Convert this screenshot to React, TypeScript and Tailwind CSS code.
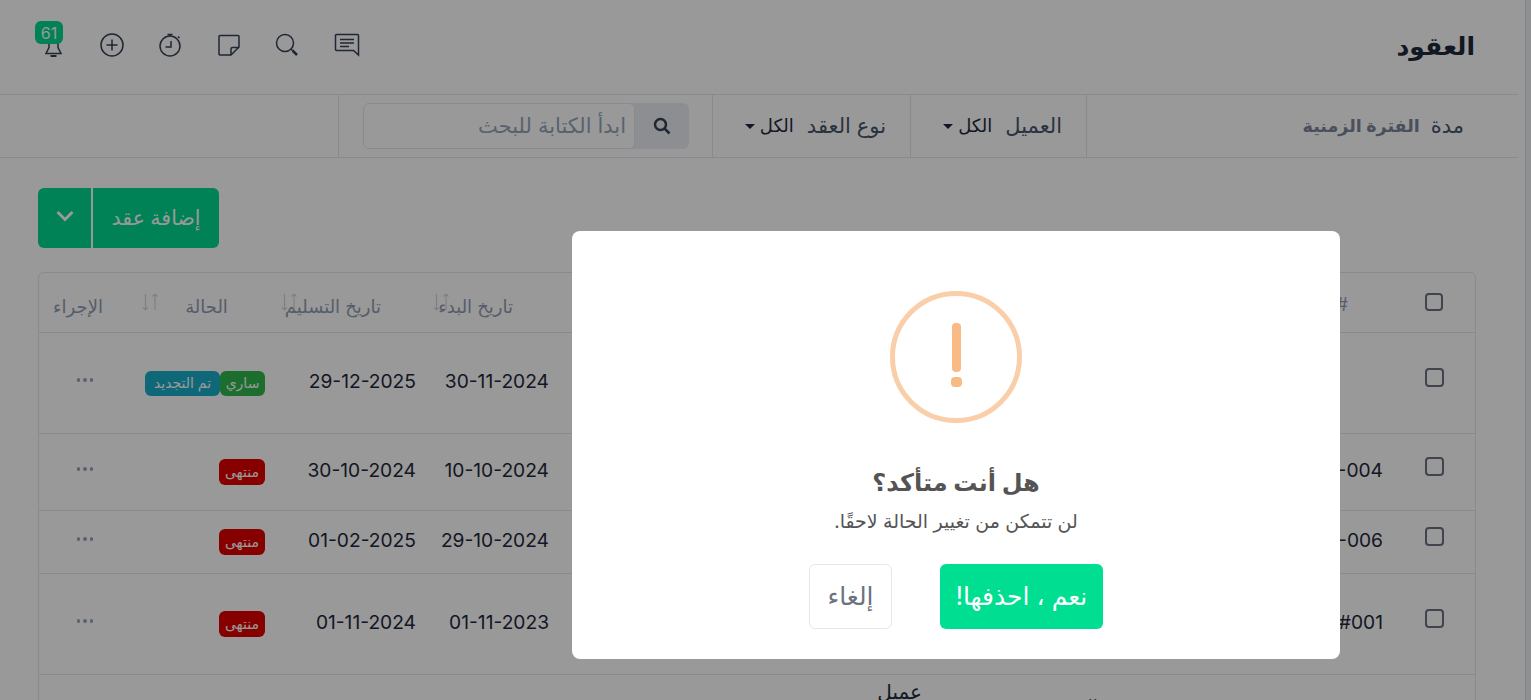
const FONT = "font-['Inter','Noto_Sans','DejaVu_Sans',sans-serif]";

type Row = {
  id: string;
  start: string;
  end: string;
  height: string;
  badge: "active" | "ended";
};

const rows: Row[] = [
  { id: "", start: "30-11-2024", end: "29-12-2025", height: "h-[101px]", badge: "active" },
  { id: "-004", start: "10-10-2024", end: "30-10-2024", height: "h-[77px]", badge: "ended" },
  { id: "-006", start: "29-10-2024", end: "01-02-2025", height: "h-[63px]", badge: "ended" },
  { id: "#001", start: "01-11-2023", end: "01-11-2024", height: "h-[101px]", badge: "ended" },
];

function SortArrows() {
  return (
    <svg width="18" height="18" viewBox="0 0 18 18" fill="none" stroke="#d1d5db" strokeWidth="1.2">
      <path d="M3.500 1v16M1 14.500l2.500 2.500L6 14.500M13 17V1M10.500 3.500 13 1l2.500 2.500" />
    </svg>
  );
}

function Checkbox() {
  return <span className="h-[19px] w-[19px] rounded-[4px] border-2 border-[#6b7280]" />;
}

function Dots() {
  return (
    <div className="flex justify-center gap-[3px] pb-[6px]">
      <span className="h-[3.5px] w-[3.5px] rounded-full bg-[#94a3b8]" />
      <span className="h-[3.5px] w-[3.5px] rounded-full bg-[#94a3b8]" />
      <span className="h-[3.5px] w-[3.5px] rounded-full bg-[#94a3b8]" />
    </div>
  );
}

function Caret() {
  return <span className="border-x-[5px] border-t-[5px] border-x-transparent border-t-[#1e293b]" />;
}

function TopIcons() {
  return (
    <div className="flex items-center gap-[34.5px] pb-1 text-[#334155]">
      <div className="relative h-6 w-6">
        <svg width="24" height="24" viewBox="0 0 24 24" fill="none" stroke="currentColor" strokeWidth="1.500">
          <path d="M8 8v6.500L5 20.500h15l-3-6V8" />
          <path d="M9.500 23h6" strokeWidth="2" />
        </svg>
        <span className="absolute -top-[12px] -left-[6px] flex h-[23px] w-7 items-center justify-center rounded-md bg-[#00d890] text-base text-white">
          61
        </span>
      </div>
      <svg width="24" height="24" viewBox="0 0 24 24" fill="none" stroke="currentColor" strokeWidth="1.500">
        <circle cx="12" cy="12" r="11" />
        <path d="M12 6.500v11M6.500 12h11" />
      </svg>
      <svg width="24" height="24" viewBox="0 0 24 24" fill="none" stroke="currentColor" strokeWidth="1.500">
        <circle cx="12" cy="13" r="10" />
        <path d="M9.500 1.500h5M12 2v1M20 3.500l1.500 1.500M13 8v6H7.500" />
      </svg>
      <svg width="24" height="24" viewBox="0 0 24 24" fill="none" stroke="currentColor" strokeWidth="1.500">
        <path d="M3 2.500h18a1 1 0 0 1 1 1V14l-8 8H3a1 1 0 0 1-1-1V3.500a1 1 0 0 1 1-1Z" />
        <path d="M14 22v-6a1.500 1.500 0 0 1 1.500-1.500H22" />
      </svg>
      <svg width="24" height="24" viewBox="0 0 24 24" fill="none" stroke="currentColor" strokeWidth="1.500">
        <circle cx="10" cy="10" r="8.500" />
        <path d="m16 16 1.500 1.500" />
        <path d="m17.500 17.500 4.500 4.500" strokeWidth="2.500" />
      </svg>
      <svg width="26" height="24" viewBox="0 0 26 24" fill="none" stroke="currentColor" strokeWidth="1.500">
        <path d="M2.500 1.500h21a1 1 0 0 1 1 1V22l-5-4.500h-17a1 1 0 0 1-1-1v-14a1 1 0 0 1 1-1Z" />
        <path d="M6 6.500h14M6 10h14M6 13.500h9" />
      </svg>
    </div>
  );
}

function FilterBar() {
  return (
    <div dir="rtl" className="flex h-[63px] items-center border-b border-[#e2e8f0] text-[21px] text-[#475569]">
      <div className="flex h-full w-[432px] items-center gap-[11px] border-l border-[#e2e8f0] pr-[54px]">
        <span>مدة</span>
        <span className="text-[17.500px] font-semibold text-[#7c8698]">الفترة الزمنية</span>
      </div>
      <div className="flex h-full w-[176px] items-center border-l border-[#e2e8f0] pr-6">
        <span>العميل</span>
        <span className="mr-[13px] ml-[5px] text-lg text-[#1e293b]">الكل</span>
        <Caret />
      </div>
      <div className="flex h-full w-[198px] items-center border-l border-[#e2e8f0] pr-6">
        <span>نوع العقد</span>
        <span className="mr-[13px] ml-[5px] text-lg text-[#1e293b]">الكل</span>
        <Caret />
      </div>
      <div className="flex h-full w-[374px] items-center border-l border-[#e2e8f0] pr-[23px]">
        <div className="flex h-[46px] w-[326px] items-center overflow-hidden rounded-md bg-[#e9edf2]">
          <div className="flex h-full w-[54px] items-center justify-center">
            <svg width="18" height="18" viewBox="0 0 18 18" fill="none" stroke="#334155" strokeWidth="2.500">
              <circle cx="7.500" cy="7.500" r="5.500" />
              <path d="m11.500 11.500 5 5" />
            </svg>
          </div>
          <div className="flex h-full flex-1 items-center rounded-md border border-[#e2e8f0] bg-white pr-2 text-[#94a3b8]">
            ابدأ الكتابة للبحث
          </div>
        </div>
      </div>
    </div>
  );
}

function AddButton() {
  return (
    <div className="flex h-[60px] w-[181px] overflow-hidden rounded-md bg-[#00d890] text-white">
      <div className="flex w-[53px] items-center justify-center pb-1">
        <svg width="20" height="14" viewBox="0 0 20 14" fill="none" stroke="white" strokeWidth="3">
          <path d="m2.500 3 7.500 7.500L17.500 3" />
        </svg>
      </div>
      <div className="w-[2px] bg-white" />
      <div dir="rtl" className="flex flex-1 items-center justify-center text-[20.500px] font-medium">
        إضافة عقد
      </div>
    </div>
  );
}

function Badges({ kind }: { kind: Row["badge"] }) {
  if (kind === "ended") {
    return (
      <span className="flex h-[26px] items-center rounded-md bg-[#e10000] px-1.5 text-sm text-white">منتهى</span>
    );
  }
  return (
    <div className="flex">
      <span className="flex h-[25px] w-[75px] items-center justify-center rounded-md bg-[#19adc8] text-sm whitespace-nowrap text-white">
        تم التجديد
      </span>
      <span className="flex h-[25px] w-[45px] items-center justify-center rounded-md bg-[#2db74e] text-sm text-white">
        ساري
      </span>
    </div>
  );
}

function Table() {
  return (
    <div className="mt-6 mr-[42px] ml-[38px] overflow-hidden rounded-t-md border border-[#e2e8f0] text-[#1e293b]">
      <div dir="ltr" className="flex h-[60px] items-stretch border-b border-[#e2e8f0] text-lg text-[#8f9bb0]">
        <div dir="rtl" className="flex w-[78px] items-center justify-center pt-2">الإجراء</div>
        <div dir="rtl" className="relative flex w-[179px] items-center justify-center pt-2">
          الحالة
          <span className="absolute top-[20px] left-[24.500px]"><SortArrows /></span>
        </div>
        <div dir="rtl" className="relative flex w-[85px] items-center pt-2 whitespace-nowrap">
          تاريخ التسليم
          <span className="absolute top-[20px] -left-[15.500px]"><SortArrows /></span>
        </div>
        <div dir="rtl" className="relative flex w-[132px] items-center pt-2 whitespace-nowrap">
          تاريخ البدء
          <span className="absolute top-[20px] left-[51.500px]"><SortArrows /></span>
        </div>
        <div className="flex flex-1 items-center justify-end pt-1 pr-[45px]">#</div>
        <div className="flex w-[82px] items-center justify-center pb-[2px]">
          <span className="h-[18px] w-[18px] rounded-[4px] border-2 border-[#6b7280]" />
        </div>
      </div>
      {rows.map((row) => (
        <div key={row.start} className={`flex items-center border-b border-[#e2e8f0] ${row.height}`}>
          <div className="w-[92px]"><Dots /></div>
          <div className="flex w-[134px] justify-end"><Badges kind={row.badge} /></div>
          <div className="w-[151px] pb-1 text-right text-[19.200px]">{row.end}</div>
          <div className="w-[133px] pb-1 text-right text-[19.200px]">{row.start}</div>
          <div className="flex-1 pr-[10px] pb-1 text-right text-[19.200px]">{row.id}</div>
          <div className="flex w-[82px] justify-center pb-[11px]"><Checkbox /></div>
        </div>
      ))}
      <div dir="rtl" className="relative h-[60px] text-[#1e293b]">
        <span className="absolute top-[3px] right-[553px] text-xl font-medium">عميل</span>
        <span className="absolute top-[18px] right-[338px] text-lg text-[#475569]">قيمة العقد</span>
      </div>
    </div>
  );
}

function Modal() {
  return (
    <div className="absolute inset-0 z-10 bg-black/40">
      <div dir="rtl" className="absolute top-[231px] left-[572px] flex h-[428px] w-[768px] flex-col items-center rounded-lg bg-white pt-[60px]">
        <div className="flex h-[132px] w-[132px] items-center justify-center rounded-full border-[5px] border-[#facea8]">
          <div className="mb-1 flex flex-col items-center gap-[5px]">
            <span className="h-[49px] w-[9px] rounded-sm bg-[#f8bb86]" />
            <span className="h-[10px] w-[11px] rounded-sm bg-[#f8bb86]" />
          </div>
        </div>
        <h2 className="mt-[42px] text-2xl leading-9 font-bold text-[#545454]">هل أنت متأكد؟</h2>
        <p className="mt-[9px] text-[19px] leading-6 text-[#545454]">لن تتمكن من تغيير الحالة لاحقًا.</p>
        <div className="mt-[30px] flex gap-[48px] text-[25px]">
          <button className="h-[65px] w-[163px] rounded-md bg-[#00de92] text-white">نعم ، احذفها!</button>
          <button className="h-[65px] w-[83px] rounded-md border border-[#e2e8f0] bg-white text-[#6b7280]">إلغاء</button>
        </div>
      </div>
    </div>
  );
}

export default function App() {
  return (
    <div className={`relative flex h-[700px] w-[1531px] justify-between overflow-hidden bg-white ${FONT}`}>
      <div className="w-[1518px]">
        <div className="flex h-[95px] items-center justify-between border-b border-[#e2e8f0] pr-[43px] pl-[41px]">
          <TopIcons />
          <h1 dir="rtl" className="text-[25px] font-bold text-[#1e293b]">العقود</h1>
        </div>
        <FilterBar />
        <div className="mt-[30px] ml-[38px]"><AddButton /></div>
        <Table />
      </div>
      <div className="w-[6px] border-l border-[#d8dde6] bg-[#eef0f4]" />
      <Modal />
    </div>
  );
}
